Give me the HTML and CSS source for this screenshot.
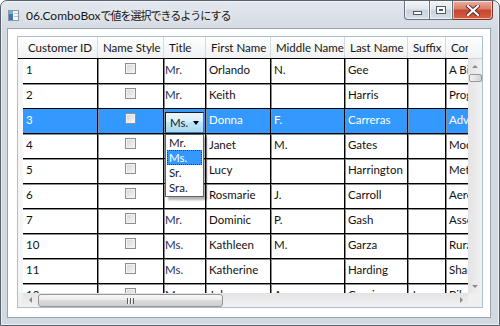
FILE: index.html
```html
<!DOCTYPE html>
<html lang="en">
<head>
    <meta charset="UTF-8">
    <title>06.ComboBoxで値を選択できるようにする</title>
    <link rel="stylesheet" href="styles.css">
</head>
<body>
    <div class="window">
        <div class="titlebar">
            <svg class="app-icon" width="11" height="11" viewBox="0 0 11 11">
                <rect x="0.5" y="0.5" width="10" height="10" fill="#f4f6f8" stroke="#8a96a3"/>
                <rect x="1" y="1" width="4" height="9" fill="#3b78b5"/>
                <rect x="1" y="1" width="4" height="3" fill="#6fb0d8"/>
                <rect x="6" y="3" width="4" height="1" fill="#b9c3cc"/>
                <rect x="6" y="6" width="4" height="1" fill="#b9c3cc"/>
            </svg>
            <span class="title"><span class="title-latin">06.ComboBox</span><span class="title-jp" lang="ja">で値を選択できるようにする</span></span>
            <div class="caption-buttons">
                <div class="cap-btn cap-min"><span class="glyph-min"></span></div>
                <div class="cap-btn cap-max"><span class="glyph-max"></span></div>
                <div class="cap-btn cap-close">
                    <svg width="14" height="11" viewBox="0 0 14 11">
                        <path d="M2 1 L12 10 M12 1 L2 10" stroke="#5a2a22" stroke-width="4" stroke-linecap="square"/>
                        <path d="M2 1 L12 10 M12 1 L2 10" stroke="#ffffff" stroke-width="2.2" stroke-linecap="square"/>
                    </svg>
                </div>
            </div>
        </div>

        <div class="client">
            <div class="datagrid">
                <div class="corner-head"></div>

                <div class="grid-main">
                    <div class="grid-header">
                        <div class="hcell c-id">Customer ID</div>
                        <div class="hcell c-style">Name Style</div>
                        <div class="hcell c-title">Title</div>
                        <div class="hcell c-first">First Name</div>
                        <div class="hcell c-middle">Middle Name</div>
                        <div class="hcell c-last">Last Name</div>
                        <div class="hcell c-suffix">Suffix</div>
                        <div class="hcell c-company">Company Name</div>
                    </div>

                    <div class="grid-body">
                        <div class="row">
                            <div class="cell c-id">1</div>
                            <div class="cell c-style"><span class="check"></span></div>
                            <div class="cell c-title">Mr.</div>
                            <div class="cell c-first">Orlando</div>
                            <div class="cell c-middle">N.</div>
                            <div class="cell c-last">Gee</div>
                            <div class="cell c-suffix"></div>
                            <div class="cell c-company">A Bike Store</div>
                        </div>
                        <div class="row">
                            <div class="cell c-id">2</div>
                            <div class="cell c-style"><span class="check"></span></div>
                            <div class="cell c-title">Mr.</div>
                            <div class="cell c-first">Keith</div>
                            <div class="cell c-middle"></div>
                            <div class="cell c-last">Harris</div>
                            <div class="cell c-suffix"></div>
                            <div class="cell c-company">Progressive Sports</div>
                        </div>
                        <div class="row selected">
                            <div class="cell c-id">3</div>
                            <div class="cell c-style"><span class="check"></span></div>
                            <div class="cell c-title">
                                <div class="combo">
                                    <span class="combo-text">Ms.</span>
                                    <span class="combo-arrow"></span>
                                </div>
                            </div>
                            <div class="cell c-first">Donna</div>
                            <div class="cell c-middle">F.</div>
                            <div class="cell c-last">Carreras</div>
                            <div class="cell c-suffix"></div>
                            <div class="cell c-company">Advanced Bike Components</div>
                        </div>
                        <div class="row">
                            <div class="cell c-id">4</div>
                            <div class="cell c-style"><span class="check"></span></div>
                            <div class="cell c-title"></div>
                            <div class="cell c-first">Janet</div>
                            <div class="cell c-middle">M.</div>
                            <div class="cell c-last">Gates</div>
                            <div class="cell c-suffix"></div>
                            <div class="cell c-company">Modular Cycle Systems</div>
                        </div>
                        <div class="row">
                            <div class="cell c-id">5</div>
                            <div class="cell c-style"><span class="check"></span></div>
                            <div class="cell c-title"></div>
                            <div class="cell c-first">Lucy</div>
                            <div class="cell c-middle"></div>
                            <div class="cell c-last">Harrington</div>
                            <div class="cell c-suffix"></div>
                            <div class="cell c-company">Metropolitan Sports Supply</div>
                        </div>
                        <div class="row">
                            <div class="cell c-id">6</div>
                            <div class="cell c-style"><span class="check"></span></div>
                            <div class="cell c-title"></div>
                            <div class="cell c-first">Rosmarie</div>
                            <div class="cell c-middle">J.</div>
                            <div class="cell c-last">Carroll</div>
                            <div class="cell c-suffix"></div>
                            <div class="cell c-company">Aerobic Exercise Company</div>
                        </div>
                        <div class="row">
                            <div class="cell c-id">7</div>
                            <div class="cell c-style"><span class="check"></span></div>
                            <div class="cell c-title">Mr.</div>
                            <div class="cell c-first">Dominic</div>
                            <div class="cell c-middle">P.</div>
                            <div class="cell c-last">Gash</div>
                            <div class="cell c-suffix"></div>
                            <div class="cell c-company">Associated Bikes</div>
                        </div>
                        <div class="row">
                            <div class="cell c-id">10</div>
                            <div class="cell c-style"><span class="check"></span></div>
                            <div class="cell c-title">Ms.</div>
                            <div class="cell c-first">Kathleen</div>
                            <div class="cell c-middle">M.</div>
                            <div class="cell c-last">Garza</div>
                            <div class="cell c-suffix"></div>
                            <div class="cell c-company">Rural Cycle Emporium</div>
                        </div>
                        <div class="row">
                            <div class="cell c-id">11</div>
                            <div class="cell c-style"><span class="check"></span></div>
                            <div class="cell c-title">Ms.</div>
                            <div class="cell c-first">Katherine</div>
                            <div class="cell c-middle"></div>
                            <div class="cell c-last">Harding</div>
                            <div class="cell c-suffix"></div>
                            <div class="cell c-company">Sharp Bikes</div>
                        </div>
                        <div class="row">
                            <div class="cell c-id">12</div>
                            <div class="cell c-style"><span class="check"></span></div>
                            <div class="cell c-title">Mr.</div>
                            <div class="cell c-first">Johnny</div>
                            <div class="cell c-middle">A.</div>
                            <div class="cell c-last">Caprio</div>
                            <div class="cell c-suffix">Jr.</div>
                            <div class="cell c-company">Bikes and Motorbikes</div>
                        </div>

                        <!-- Open drop-down of the ComboBox in row 3 -->
                        <ul class="dropdown">
                            <li>Mr.</li>
                            <li class="active">Ms.</li>
                            <li>Sr.</li>
                            <li>Sra.</li>
                        </ul>
                    </div>
                </div>

                <div class="vscroll-head"></div>
                <div class="row-headers"></div>

                <div class="vscroll">
                    <div class="sb-btn"><span class="arrow-up"></span></div>
                    <div class="sb-track-v">
                        <div class="thumb-v"></div>
                    </div>
                    <div class="sb-btn"><span class="arrow-down"></span></div>
                </div>

                <div class="hscroll-left"></div>

                <div class="hscroll">
                    <div class="sb-btn"><span class="arrow-left"></span></div>
                    <div class="thumb-h"><span class="grip"></span></div>
                    <div class="sb-track-h"></div>
                    <div class="sb-btn"><span class="arrow-right"></span></div>
                </div>

                <div class="scroll-corner"></div>
            </div>
        </div>
    </div>
</body>
</html>
```

FILE: styles.css
```css
* {
    margin: 0;
    padding: 0;
    box-sizing: border-box;
}

body {
    font-family: Lato, "Noto Sans CJK JP", sans-serif;
    font-size: 11.5px;
    color: #111;
    background: #ffffff;
}

/* Window chrome */
.window {
    width: 500px;
    height: 326px;
    border: 1px solid #59626c;
    border-radius: 7px 7px 0 0;
    background: linear-gradient(#e3e8ee, #d3dae2 28px, #d2d9e1);
    box-shadow: inset 0 0 0 1px rgba(255, 255, 255, 0.55);
    display: flex;
    flex-direction: column;
}

.titlebar {
    height: 27px;
    display: flex;
    align-items: center;
    padding-left: 7px;
}

.app-icon {
    flex: none;
    margin-right: 7px;
    margin-top: 1px;
}

.title {
    color: #141414;
    text-shadow: 0 0 6px rgba(255, 255, 255, 0.95);
    white-space: nowrap;
    margin-top: 1px;
}

.title-latin {
    font-family: Lato, sans-serif;
    font-size: 12px;
}

.title-jp {
    font-family: "Noto Sans CJK JP", sans-serif;
    font-size: 11px;
    letter-spacing: -1px;
}

.caption-buttons {
    display: flex;
    align-self: flex-start;
    margin-left: auto;
    margin-right: 6px;
}

.cap-btn {
    height: 19px;
    border: 1px solid #69727c;
    border-top: none;
    display: flex;
    align-items: center;
    justify-content: center;
    background: linear-gradient(#f1f4f7, #e1e7ed 45%, #cad3dc 50%, #d6dee7);
    box-shadow: inset 0 0 0 1px rgba(255, 255, 255, 0.6);
}

.cap-min {
    width: 26px;
    border-radius: 0 0 0 4px;
}

.cap-max {
    width: 23px;
    border-left: none;
}

.cap-close {
    width: 40px;
    border-left: none;
    border-color: #7d3426;
    border-radius: 0 0 4px 0;
    background: linear-gradient(#eab0a2, #dc7c66 45%, #c7462f 50%, #d3603f);
}

.glyph-min {
    width: 9px;
    height: 4px;
    margin-top: 5px;
    background: #ffffff;
    border: 1px solid #4e5866;
}

.glyph-max {
    width: 10px;
    height: 8px;
    background: #ffffff;
    border: 1px solid #4e5866;
    box-shadow: inset 0 0 0 2px #ffffff, inset 0 0 0 3px #4e5866;
}

/* Client area */
.client {
    flex: 1;
    margin: 0 8px 7px 6px;
    border: 1px solid #98a3ae;
    background: #ffffff;
    padding: 7px 7px 0 9px;
}

/* DataGrid */
.datagrid {
    width: 466px;
    height: 272px;
    border: 1px solid #a8bfd6;
    display: grid;
    grid-template-columns: 5px 445px 14px;
    grid-template-rows: 22px 234px 14px;
}

.corner-head {
    grid-column: 1;
    grid-row: 1;
    background: linear-gradient(#ffffff, #f1f2f4);
    border-bottom: 1px solid #000;
}

.grid-main {
    grid-column: 2;
    grid-row: 1 / 3;
    overflow: hidden;
    display: flex;
    flex-direction: column;
}

.grid-header {
    display: flex;
    height: 22px;
    flex: none;
    background: linear-gradient(#ffffff, #f7f8f9 50%, #eef0f2);
    border-bottom: 1px solid #000;
}

.hcell {
    flex: none;
    line-height: 21px;
    padding-left: 5px;
    border-right: 1px solid #d5dbe1;
    white-space: nowrap;
    overflow: hidden;
    color: #141414;
}

.grid-body {
    position: relative;
    flex: 1;
    overflow: hidden;
}

.row {
    display: flex;
    height: 25px;
    border-bottom: 1px solid #000;
    box-shadow: 0 1px 0 #8c8c8c;
}

.row.selected {
    background: #3399ff;
    color: #ffffff;
}

.cell {
    flex: none;
    padding: 3px 0 0 3px;
    line-height: 15px;
    border-right: 1px solid #000;
    box-shadow: 1px 0 0 #8c8c8c;
    white-space: nowrap;
    overflow: hidden;
}

.c-id { width: 75px; }
.c-style { width: 66px; }
.c-title { width: 42px; }
.c-first { width: 65px; }
.c-middle { width: 74px; }
.c-last { width: 63px; }
.c-suffix { width: 38px; }
.c-company { width: 160px; }

.cell.c-style {
    display: flex;
    justify-content: center;
    padding-left: 0;
}

.cell.c-title {
    padding-left: 1px;
    color: #1e3261;
}

.check {
    width: 11px;
    height: 11px;
    margin-top: 1px;
    border: 1px solid #8f8f8f;
    background: linear-gradient(135deg, #d6d6d6, #f6f6f6);
    box-shadow: inset 0 0 0 1px #f2f2f2;
}

/* ComboBox in edit mode */
.combo {
    width: 39px;
    height: 21px;
    display: flex;
    align-items: center;
    border: 1px solid #1c1c1c;
    border-right-color: #3c7fb1;
    border-bottom-color: #3c7fb1;
    background: linear-gradient(#eaf6fd, #d9f0fc 48%, #bee6fd 50%, #a7d9f5);
    color: #1a1a1a;
}

.combo-text {
    padding-left: 4px;
    flex: 1;
}

.combo-arrow {
    width: 0;
    height: 0;
    margin-right: 4px;
    border-left: 3.5px solid transparent;
    border-right: 3.5px solid transparent;
    border-top: 4px solid #000;
}

.dropdown {
    position: absolute;
    left: 142px;
    top: 75px;
    width: 39px;
    list-style: none;
    background: #ffffff;
    border: 1px solid #646464;
    padding: 0 1px 1px;
    box-shadow: 3px 3px 2px rgba(0, 0, 0, 0.3);
}

.dropdown li {
    height: 15px;
    line-height: 15px;
    padding-left: 2px;
    color: #1a1a2e;
}

.dropdown li.active {
    background: #3399ff;
    color: #ffffff;
    outline: 1px dotted #1b3f73;
    outline-offset: -1px;
}

/* Scrollbars */
.vscroll-head {
    grid-column: 3;
    grid-row: 1;
    background: linear-gradient(#ffffff, #eff1f3);
    border-bottom: 1px solid #d0d4d8;
}

.row-headers {
    grid-column: 1;
    grid-row: 2;
    background: #f6f6f6;
}

.vscroll {
    grid-column: 3;
    grid-row: 2;
    display: flex;
    flex-direction: column;
    background: linear-gradient(90deg, #e4e4e6, #f1f1f2);
}

.hscroll-left {
    grid-column: 1;
    grid-row: 3;
    background: #efefef;
}

.hscroll {
    grid-column: 2;
    grid-row: 3;
    display: flex;
    background: linear-gradient(#e4e4e6, #f1f1f2);
}

.scroll-corner {
    grid-column: 3;
    grid-row: 3;
    background: #efefef;
}

.sb-btn {
    flex: none;
    width: 14px;
    height: 14px;
    display: flex;
    align-items: center;
    justify-content: center;
}

.sb-track-v {
    flex: 1;
    padding-top: 1px;
}

.sb-track-h {
    flex: 1;
}

.thumb-v {
    width: 13px;
    height: 8px;
    margin-left: 1px;
    border: 1px solid #979797;
    border-radius: 2px;
    background: linear-gradient(90deg, #f4f4f4, #e2e2e2 50%, #d3d3d3);
}

.thumb-h {
    flex: none;
    width: 185px;
    height: 13px;
    margin: 1px 0 0 1px;
    border: 1px solid #979797;
    border-radius: 3px;
    background: linear-gradient(#f7f7f7, #ececec 45%, #dbdbdb 50%, #cfcfcf);
    display: flex;
    align-items: center;
    justify-content: center;
}

.grip {
    width: 7px;
    height: 6px;
    background: repeating-linear-gradient(90deg, #5e5e5e 0 1px, #f4f4f4 1px 2px, transparent 2px 3px);
}

.arrow-up,
.arrow-down {
    width: 0;
    height: 0;
    border-left: 3px solid transparent;
    border-right: 3px solid transparent;
}

.arrow-up {
    border-bottom: 3px solid #8a8a8a;
}

.arrow-down {
    border-top: 3px solid #8a8a8a;
}

.arrow-left,
.arrow-right {
    width: 0;
    height: 0;
    border-top: 3px solid transparent;
    border-bottom: 3px solid transparent;
}

.arrow-left {
    border-right: 3px solid #8a8a8a;
}

.arrow-right {
    border-left: 3px solid #8a8a8a;
}
```
